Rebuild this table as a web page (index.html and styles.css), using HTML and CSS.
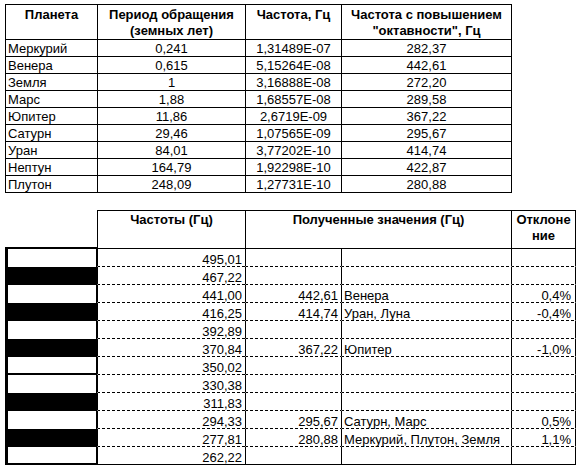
FILE: index.html
```html
<!DOCTYPE html>
<html lang="ru">
<head>
<meta charset="utf-8">
<title>Планеты и частоты</title>
<link rel="stylesheet" href="styles.css">
</head>
<body>
<div class="sheet">
  <table class="planets">
    <colgroup><col class="w-name"><col class="w-period"><col class="w-freq"><col class="w-oct"></colgroup>
    <thead>
      <tr><th>Планета</th><th>Период обращения<br>(земных лет)</th><th>Частота, Гц</th><th>Частота с повышением<br>"октавности", Гц</th></tr>
    </thead>
    <tbody>
      <tr><td class="name">Меркурий</td><td>0,241</td><td>1,31489E-07</td><td>282,37</td></tr>
      <tr><td class="name">Венера</td><td>0,615</td><td>5,15264E-08</td><td>442,61</td></tr>
      <tr><td class="name">Земля</td><td>1</td><td>3,16888E-08</td><td>272,20</td></tr>
      <tr><td class="name">Марс</td><td>1,88</td><td>1,68557E-08</td><td>289,58</td></tr>
      <tr><td class="name">Юпитер</td><td>11,86</td><td>2,6719E-09</td><td>367,22</td></tr>
      <tr><td class="name">Сатурн</td><td>29,46</td><td>1,07565E-09</td><td>295,67</td></tr>
      <tr><td class="name">Уран</td><td>84,01</td><td>3,77202E-10</td><td>414,74</td></tr>
      <tr><td class="name">Нептун</td><td>164,79</td><td>1,92298E-10</td><td>422,87</td></tr>
      <tr><td class="name">Плутон</td><td>248,09</td><td>1,27731E-10</td><td>280,88</td></tr>
    </tbody>
  </table>

  <table class="notes">
    <colgroup><col class="w-key"><col class="w-hz"><col class="w-got"><col class="w-who"><col class="w-dev"></colgroup>
    <thead>
      <tr><th class="blank"></th><th>Частоты (Гц)</th><th colspan="2">Полученные значения (Гц)</th><th>Отклоне<br>ние</th></tr>
    </thead>
    <tbody>
      <tr><td class="key"></td><td class="num">495,01</td><td class="num"></td><td class="who"></td><td class="dev"></td></tr>
      <tr><td class="key black"></td><td class="num">467,22</td><td class="num"></td><td class="who"></td><td class="dev"></td></tr>
      <tr><td class="key"></td><td class="num">441,00</td><td class="num">442,61</td><td class="who">Венера</td><td class="dev">0,4%</td></tr>
      <tr><td class="key black"></td><td class="num">416,25</td><td class="num">414,74</td><td class="who">Уран, Луна</td><td class="dev">-0,4%</td></tr>
      <tr><td class="key"></td><td class="num">392,89</td><td class="num"></td><td class="who"></td><td class="dev"></td></tr>
      <tr><td class="key black"></td><td class="num">370,84</td><td class="num">367,22</td><td class="who">Юпитер</td><td class="dev">-1,0%</td></tr>
      <tr><td class="key split"></td><td class="num">350,02</td><td class="num"></td><td class="who"></td><td class="dev"></td></tr>
      <tr><td class="key"></td><td class="num">330,38</td><td class="num"></td><td class="who"></td><td class="dev"></td></tr>
      <tr><td class="key black"></td><td class="num">311,83</td><td class="num"></td><td class="who"></td><td class="dev"></td></tr>
      <tr><td class="key"></td><td class="num">294,33</td><td class="num">295,67</td><td class="who">Сатурн, Марс</td><td class="dev">0,5%</td></tr>
      <tr><td class="key black"></td><td class="num">277,81</td><td class="num">280,88</td><td class="who">Меркурий, Плутон, Земля</td><td class="dev">1,1%</td></tr>
      <tr><td class="key"></td><td class="num">262,22</td><td class="num"></td><td class="who"></td><td class="dev"></td></tr>
    </tbody>
  </table>
</div>
</body>
</html>
```

FILE: styles.css
```css
* { box-sizing: border-box; }
html, body { margin: 0; background: #fff; }
body {
  padding: 4px 0 0 5px;
  font-family: "Liberation Sans", Arial, sans-serif;
  font-size: 13px;
  color: #000;
}
.sheet {
  display: flex;
  flex-direction: column;
  align-items: flex-start;
  gap: 17px;
}
table {
  border-collapse: separate;
  border-spacing: 0;
  table-layout: fixed;
}

/* ---- top table ---- */
.planets { width: 507px; }
.planets .w-name { width: 92px; }
.planets .w-period { width: 148px; }
.planets .w-freq { width: 96px; }
.planets .w-oct { width: 171px; }
.planets th, .planets td {
  border-left: 1px solid #000;
  border-top: 1px solid #000;
  padding: 0 2px;
  white-space: nowrap;
}
.planets th:last-child, .planets td:last-child { border-right: 1px solid #000; }
.planets tbody tr:last-child td { border-bottom: 1px solid #000; }
.planets th {
  height: 34px;
  padding-top: 2px;
  line-height: 16px;
  font-weight: bold;
  text-align: center;
  vertical-align: top;
}
.planets td {
  height: 17px;
  line-height: 15px;
  text-align: center;
  vertical-align: middle;
}
.planets tbody tr:last-child td { height: 18px; }
.planets td.name { text-align: left; padding-left: 2px; }

/* ---- bottom table ---- */
.notes { width: 571px; }
.notes .w-key { width: 92px; }
.notes .w-hz { width: 148px; }
.notes .w-got { width: 96px; }
.notes .w-who { width: 170px; }
.notes .w-dev { width: 65px; }
.notes th {
  height: 39px;
  padding: 1px 2px 0;
  line-height: 16px;
  font-weight: bold;
  text-align: center;
  vertical-align: top;
  border-top: 1px solid #000;
  border-left: 1px solid #000;
  border-bottom: 1px solid #000;
}
.notes th:last-child { border-right: 1px solid #000; }
.notes th.blank { border: 0; border-bottom: 2px solid #000; }
.notes td {
  height: 18px;
  padding: 0 3px 0 2px;
  line-height: 12px;
  vertical-align: bottom;
  white-space: nowrap;
  border-left: 1px solid #000;
  border-bottom: 1px solid transparent;
  background-image: linear-gradient(to right, #000 3px, transparent 3px);
  background-size: 5px 1px;
  background-repeat: repeat-x;
  background-position: left bottom;
  background-origin: border-box;
  background-clip: border-box;
}
.notes tbody tr:last-child td { border-bottom: 1px solid #000; background-image: none; }
.notes td.num { text-align: right; }
.notes td.who { text-align: left; padding-left: 2px; }
.notes td.dev { text-align: right; padding-right: 4px; border-right: 1px solid #000; }
.notes td.key {
  padding: 0;
  background: #fff;
  border-left: 3px solid #000;
  border-right: 1px solid #000;
  border-bottom: 0;
}
.notes td.key.black { background: #000; }
.notes td.key.split { border-bottom: 2px solid #000; }
.notes tbody tr:last-child td.key { border-bottom: 2px solid #000; }
```
